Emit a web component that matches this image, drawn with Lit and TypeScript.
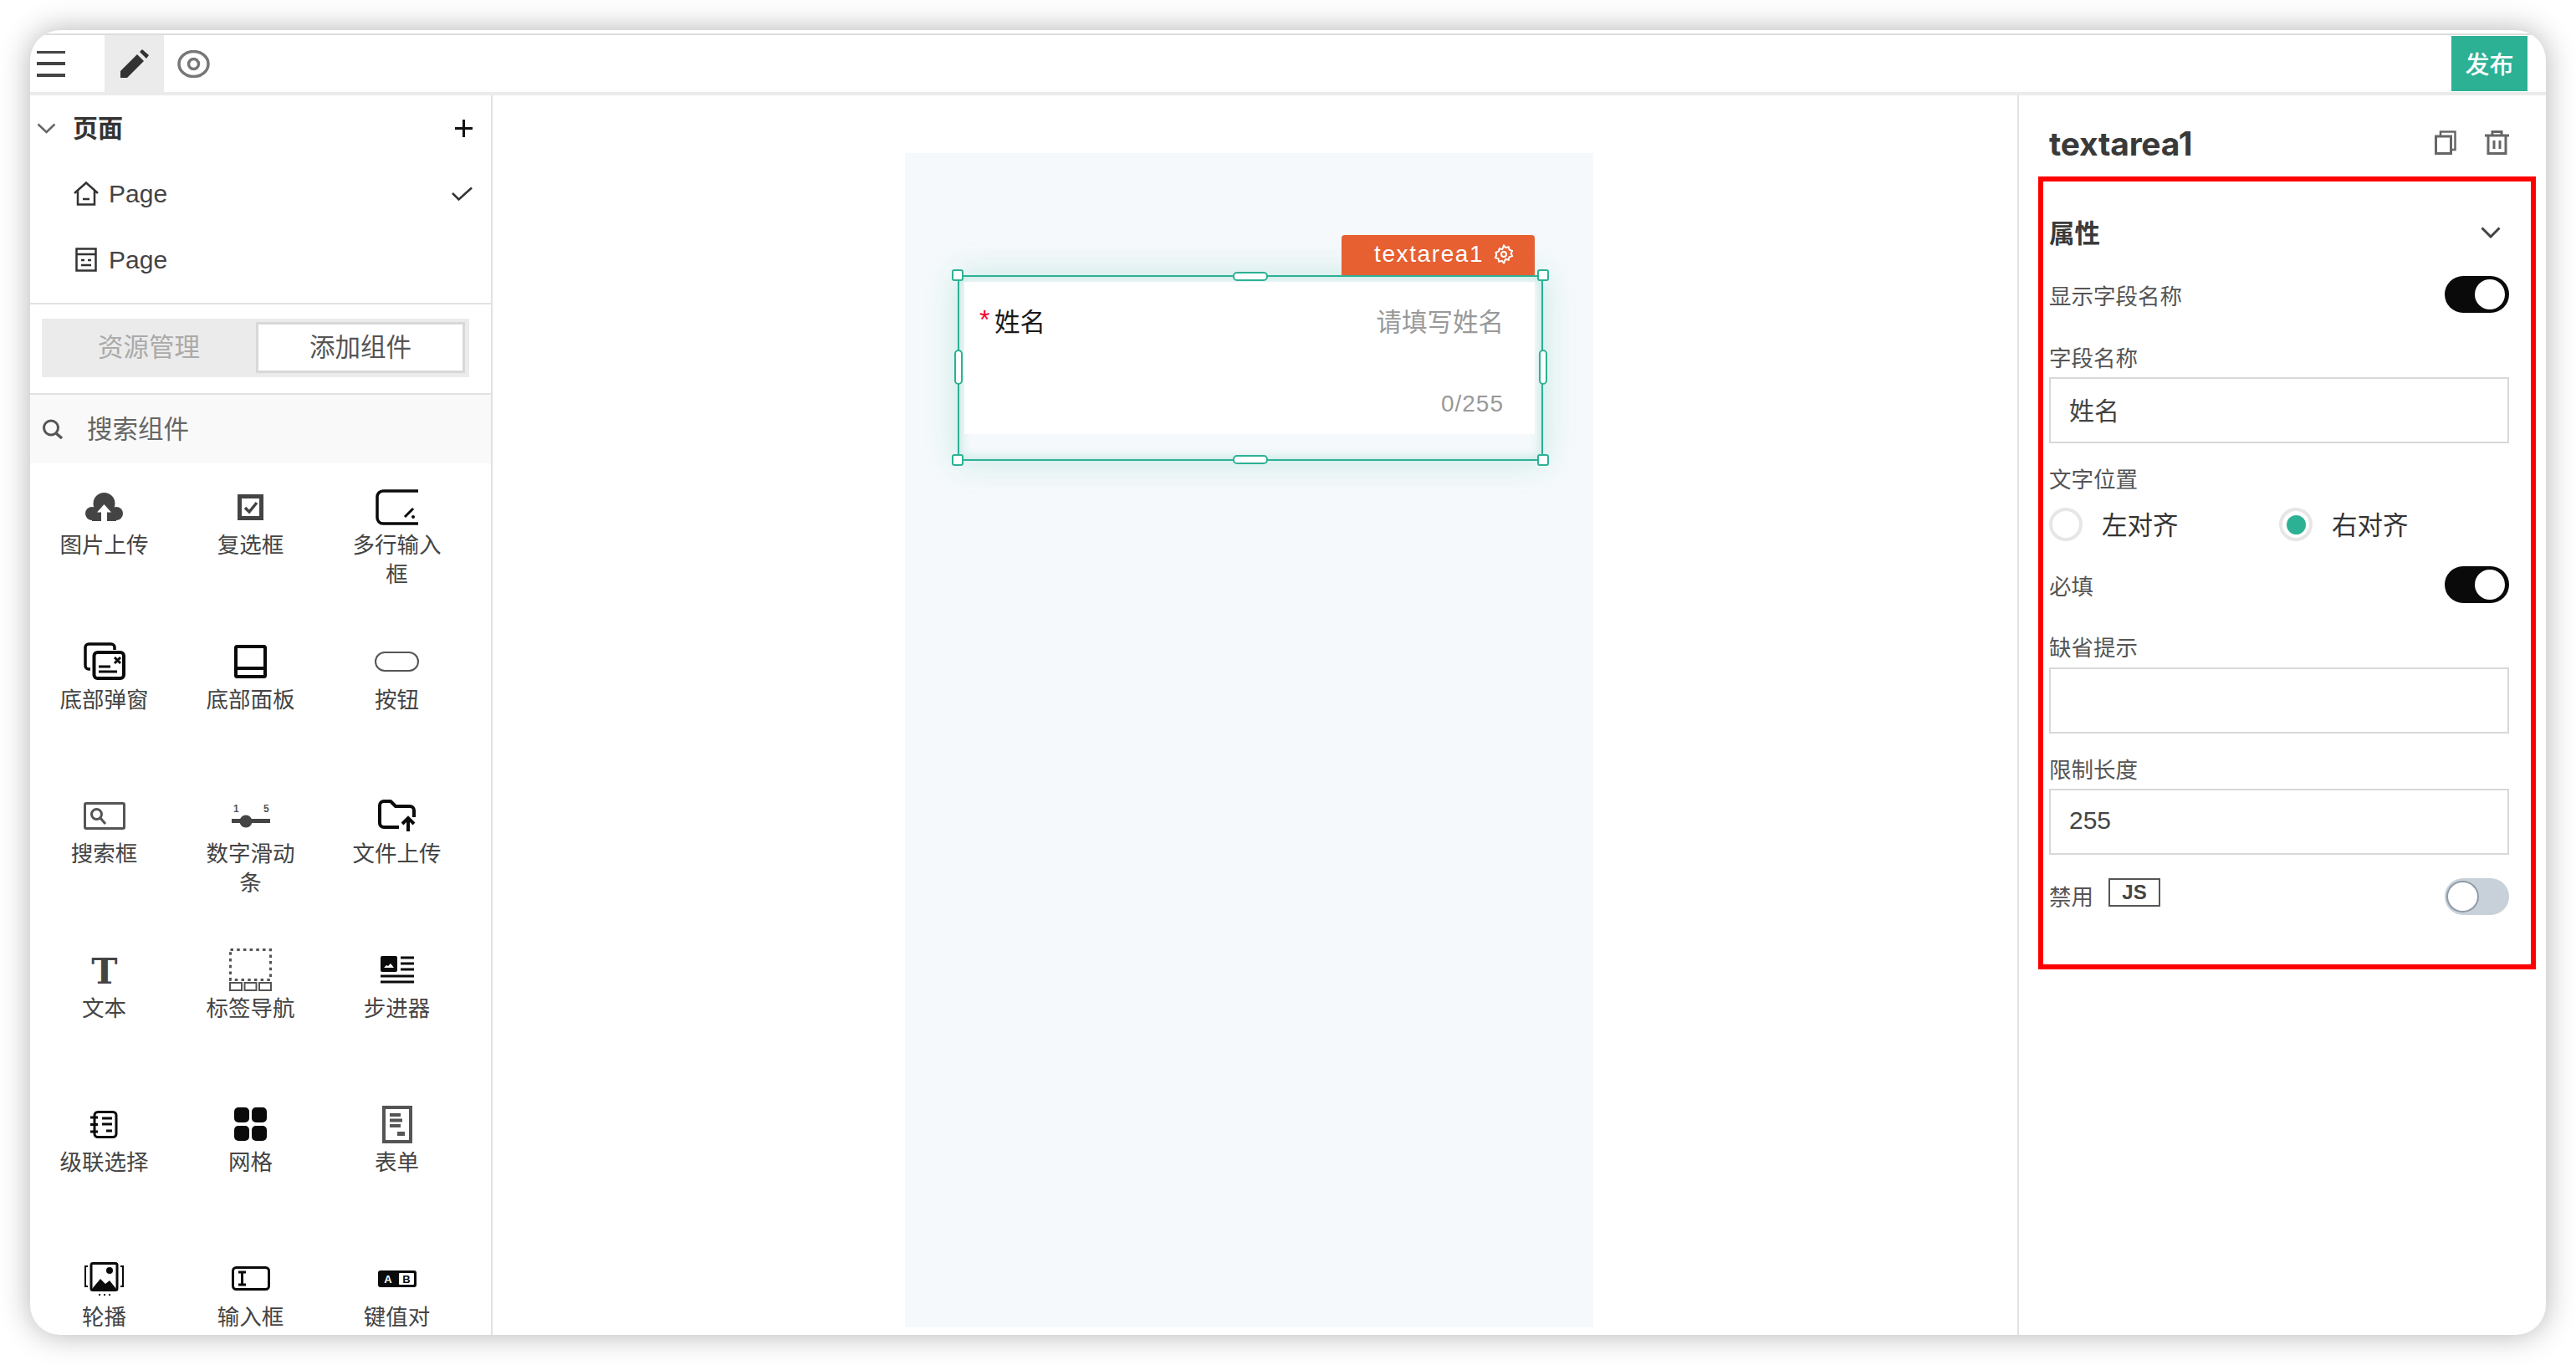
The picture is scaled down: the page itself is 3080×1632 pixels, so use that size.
import { LitElement, html, css, svg } from "lit";
import { customElement } from "lit/decorators.js";

const D = "#444";
const K = "#0a0a0a";

interface Item { label: string; w: number; h: number; art: unknown }

const items: Item[] = [
  { label: "图片上传", w: 45, h: 34, art: svg`
    <circle cx="22.5" cy="13" r="13" fill="${D}"/><circle cx="8" cy="25" r="8" fill="${D}"/><circle cx="37" cy="25" r="8" fill="${D}"/>
    <rect x="8" y="20" width="29" height="14" fill="${D}"/>
    <path d="M22.5 14 31 23.5H26V34H19V23.5H14Z" fill="#fff"/>` },
  { label: "复选框", w: 31, h: 31, art: svg`
    <rect x="2.5" y="2.5" width="26" height="26" fill="none" stroke="${D}" stroke-width="5"/>
    <path d="M9 16l5 5 9-11" fill="none" stroke="${D}" stroke-width="3.5"/>` },
  { label: "多行输入框", w: 51, h: 43, art: svg`
    <path d="M51 2H9a7 7 0 0 0-7 7v25a7 7 0 0 0 7 7h42" fill="none" stroke="${K}" stroke-width="3.5"/>
    <path d="M35 33l10-10" fill="none" stroke="${K}" stroke-width="3"/><circle cx="45" cy="33" r="2" fill="${K}"/>` },
  { label: "底部弹窗", w: 50, h: 45, art: svg`
    <path d="M8 32H6a4 4 0 0 1-4-4V6a4 4 0 0 1 4-4h27a4 4 0 0 1 4 4v3" fill="none" stroke="${K}" stroke-width="3.5"/>
    <rect x="12.5" y="12" width="35.5" height="31" rx="4" fill="none" stroke="${K}" stroke-width="4"/>
    <path d="M18 29h14M18 35h22" stroke="${K}" stroke-width="3"/><path d="M37 18l7 7M44 18l-7 7" stroke="${K}" stroke-width="3"/>` },
  { label: "底部面板", w: 39, h: 40, art: svg`
    <rect x="2" y="2" width="35" height="36" rx="1.5" fill="none" stroke="${K}" stroke-width="4"/>
    <path d="M2 28h35" stroke="${K}" stroke-width="4"/>` },
  { label: "按钮", w: 53, h: 24, art: svg`<rect x="1" y="1" width="51" height="22" rx="11" fill="none" stroke="#555" stroke-width="2"/>` },
  { label: "搜索框", w: 50, h: 33, art: svg`
    <rect x="1.5" y="1.5" width="47" height="30" rx="1.5" fill="none" stroke="#555" stroke-width="3"/>
    <circle cx="15.5" cy="14.5" r="6" fill="none" stroke="#555" stroke-width="3"/><path d="M20 19l6 7" stroke="#555" stroke-width="3"/>` },
  { label: "数字滑动条", w: 46, h: 30, art: svg`
    <text x="2" y="11" class="tiny">1</text><text x="38" y="11" class="tiny">5</text>
    <rect x="0" y="19" width="46" height="5" fill="${D}"/><circle cx="17" cy="22" r="7.5" fill="${D}"/>` },
  { label: "文件上传", w: 45, h: 38, art: svg`
    <path d="M25 33H7a5 5 0 0 1-5-5V7a5 5 0 0 1 5-5h8l6 6h17a5 5 0 0 1 5 5v8" fill="none" stroke="${K}" stroke-width="4" stroke-linejoin="round"/>
    <path d="M36 38V22M29 29l7-7 7 7" fill="none" stroke="${K}" stroke-width="4"/>` },
  { label: "文本", w: 44, h: 52, art: svg`<text x="22" y="42" text-anchor="middle" class="tee">T</text>` },
  { label: "标签导航", w: 51, h: 51, art: svg`
    <rect x="1.5" y="1.5" width="48" height="36" fill="none" stroke="#555" stroke-width="3" stroke-dasharray="3.5 4.2"/>
    <rect x="1" y="41" width="14" height="9" fill="none" stroke="#555" stroke-width="2"/><rect x="18.5" y="41" width="14" height="9" fill="none" stroke="#555" stroke-width="2"/><rect x="36" y="41" width="14" height="9" fill="none" stroke="#555" stroke-width="2"/>` },
  { label: "步进器", w: 40, h: 33, art: svg`
    <rect x="0" y="0" width="20" height="19" rx="2" fill="${K}"/><path d="M4 14l3-3 2 1 3-3 4 5Z" fill="#fff"/>
    <path d="M24 2h16M24 9h16M24 16h16M0 24h40M0 31h40" stroke="${K}" stroke-width="3"/>` },
  { label: "级联选择", w: 33, h: 33, art: svg`
    <rect x="5" y="1.5" width="26" height="30" rx="4" fill="none" stroke="${K}" stroke-width="3"/>
    <path d="M0 8h9M0 16.5h9M0 25h9" stroke="${K}" stroke-width="3"/><path d="M14 9h12M14 16h12M19 24h7" stroke="${K}" stroke-width="3"/>` },
  { label: "网格", w: 39, h: 40, art: svg`
    <rect x="0" y="0" width="18" height="18" rx="5" fill="${K}"/><rect x="21" y="0" width="18" height="18" rx="5" fill="${K}"/>
    <rect x="0" y="22" width="18" height="18" rx="5" fill="${K}"/><rect x="21" y="22" width="18" height="18" rx="5" fill="${K}"/>` },
  { label: "表单", w: 36, h: 45, art: svg`
    <rect x="2" y="2" width="32" height="41" fill="none" stroke="#555" stroke-width="4"/>
    <path d="M9 11h13M9 17.500h15M9 24h13" stroke="#555" stroke-width="4"/><rect x="18" y="31" width="9" height="5" fill="#555"/>` },
  { label: "轮播", w: 47, h: 40, art: svg`
    <rect x="8" y="1.500" width="31" height="32" rx="2" fill="none" stroke="${K}" stroke-width="3"/>
    <path d="M9 32l10-12 6 6 5-4 8 10Z" fill="${K}"/><circle cx="30" cy="10" r="4" fill="${K}"/>
    <path d="M4 5H1v24h3M43 5h3v24h-3" fill="none" stroke="${K}" stroke-width="2"/><path d="M17 39h2M23 39h2M29 39h2" stroke="${K}" stroke-width="2"/>` },
  { label: "输入框", w: 46, h: 29, art: svg`
    <rect x="1.500" y="1.500" width="43" height="26" rx="4" fill="none" stroke="${K}" stroke-width="3"/>
    <path d="M8 7h9M8 22h9M12.500 7v15" stroke="${K}" stroke-width="3"/>` },
  { label: "键值对", w: 46, h: 20, art: svg`
    <rect x="0" y="0" width="46" height="20" rx="3" fill="${K}"/><rect x="25" y="3" width="18" height="14" rx="1" fill="#fff"/>
    <text x="12" y="15" text-anchor="middle" class="ab ab-a">A</text><text x="34" y="15" text-anchor="middle" class="ab">B</text>` },
];

const chevron = (w: number, h: number, c: string, sw: number) => html`
  <svg width="${w}" height="${h}" viewBox="0 0 ${w} ${h}"><path d="M1.500 1.500 ${w / 2} ${h - 2} ${w - 1.5} 1.500" fill="none" stroke="${c}" stroke-width="${sw}"/></svg>`;

@customElement("app-root")
export class AppRoot extends LitElement {
  static styles = css`
    :host { display: block; width: 3080px; height: 1632px; padding: 36px; box-sizing: border-box; background: #fff;
      font-family: "Liberation Sans", "Noto Sans CJK SC", sans-serif; color: #444; }
    * { box-sizing: border-box; }
    .window { height: 1560px; width: 3008px; background: #fff; border-radius: 36px; overflow: hidden; display: flex; flex-direction: column;
      box-shadow: 0 0 36px rgba(0,0,0,.3); padding-top: 4px; position: relative; }
    .toolbar { height: 74px; flex: none; border-top: 2px solid #ddd; border-bottom: 4px solid #ebebeb; display: flex; align-items: center; padding-left: 8px; }
    .burger { width: 34px; height: 31px; display: flex; flex-direction: column; justify-content: space-between; }
    .burger i { display: block; height: 3.5px; background: #444; }
    .tool-on { margin-left: 47px; width: 71px; height: 68px; background: #ebebeb; display: flex; align-items: center; justify-content: center; }
    .eye { margin-left: 16px; display: block; }
    .publish { margin-left: auto; margin-right: 22px; width: 91px; height: 66px; background: #2cb195; color: #fff; font-size: 29px; font-weight: 500; display: flex; align-items: center; justify-content: center; padding-bottom: 2px; }
    .main { flex: 1; min-height: 0; display: flex; }

    .side { width: 553px; flex: none; border-right: 2px solid #e2e2e2; display: flex; flex-direction: column; overflow: hidden; }
    .pages { height: 250px; flex: none; border-bottom: 2px solid #e2e2e2; }
    .pg-head { height: 78px; display: flex; align-items: center; padding: 0 22px 0 8px; font-size: 30px; font-weight: 600; color: #333; }
    .pg-head .t { margin: 0 0 5px 20px; flex: 1; }
    .pg-row { height: 79px; display: flex; align-items: center; padding: 0 22px 0 52px; font-size: 30px; }
    .pg-row .t { flex: 1; margin-left: 12px; }
    .pg-row .ic { width: 30px; display: flex; justify-content: center; }
    .tabs-wrap { height: 108px; flex: none; border-bottom: 2px solid #e2e2e2; padding: 17px 0 0 14px; }
    .tabs { width: 511px; height: 70px; background: #ebebeb; padding: 4px 5px 5px 0; display: flex; font-size: 30.500px; color: #aaa; }
    .tab { flex: 1; display: flex; align-items: center; justify-content: center; padding-bottom: 5px; }
    .tab.on { flex: none; width: 250px; background: #fff; border: 3px solid #d8d8d8; color: #555; }
    .search { height: 82px; flex: none; background: #f9f9f9; display: flex; align-items: center; padding-left: 14px; font-size: 30.500px; color: #666; }
    .search span { margin: 0 0 5px 28px; }
    .grid { display: grid; grid-template-columns: repeat(3, 175px); grid-auto-rows: 184.5px; padding: 26px 0 0 1px; }
    .item { display: flex; flex-direction: column; align-items: center; }
    .item .box { height: 52px; flex: none; display: flex; align-items: center; justify-content: center; }
    .item svg { display: block; }
    .item .lab { font-size: 26.500px; line-height: 35px; width: 110px; text-align: center; color: #444; margin-top: 3px; }
    .tiny { font: 700 12px "Liberation Sans", sans-serif; fill: #555; }
    .tee { font: 700 42px "DejaVu Serif", serif; fill: #444; }
    .ab { font: 700 13px "Liberation Sans", sans-serif; fill: #0a0a0a; }
    .ab-a { fill: #fff; }

    .canvas { flex: 1; min-width: 0; padding: 69px 0 9px 493px; }
    .phone { width: 823px; height: 100%; background: #f5f9fb; padding: 146px 0 0 63px; }
    .sel { position: relative; width: 700px; height: 222px; border: 2px solid #2cb195; padding: 6px 8px 0 6px;
      background: #f5f9fb; box-shadow: 0 0 36px rgba(44,177,149,.24), inset 0 0 14px rgba(44,177,149,.32); }
    .card { height: 182px; background: #fff; display: flex; flex-direction: column; justify-content: space-between; padding: 32px 37px 21px 18px; }
    .f-top { display: flex; justify-content: space-between; align-items: center; font-size: 30.500px; line-height: 32px; }
    .name { color: #1a1a1a; display: flex; }
    .star { color: #f5002d; font-size: 32px; line-height: 26px; width: 18px; }
    .ph { color: #999; }
    .count { align-self: flex-end; font-size: 28px; line-height: 30px; color: #999; letter-spacing: 1px; }
    .tag { position: absolute; right: 8px; top: -50px; width: 231px; height: 48px; background: #e66032; border-radius: 4px 4px 0 0; color: #fff;
      font-size: 28px; letter-spacing: 1.600px; display: flex; align-items: center; padding: 0 0 3px 39px; }
    .tag svg { margin-left: 12px; }
    .h { position: absolute; background: #fff; border: 2.500px solid #2cb195; border-radius: 5px; }
    .h.c { width: 14px; height: 14px; border-radius: 3px; }
    .h.tl { left: -9px; top: -9px; } .h.tr { right: -9px; top: -9px; } .h.bl { left: -9px; bottom: -8px; } .h.br { right: -9px; bottom: -8px; }
    .h.hz { width: 42px; height: 11px; left: 327px; }
    .h.hz.t { top: -6px; } .h.hz.b { bottom: -6px; }
    .h.vt { width: 10px; height: 42px; top: 87px; }
    .h.vt.l { left: -6px; } .h.vt.r { right: -7px; }

    .panel { width: 632px; flex: none; border-left: 2px solid #e2e2e2; padding: 0 44px 0 36px; position: relative; font-size: 26.500px; color: #555; }
    .title { height: 114px; display: flex; align-items: center; }
    .title .name2 { flex: 1; font: 700 39px Inter, sans-serif; color: #3a3a3a; letter-spacing: -.2px; }
    .title svg + svg { margin-left: 34px; }
    .title .ops { display: flex; align-items: center; margin-top: -2px; }
    .sec { height: 100px; display: flex; align-items: center; justify-content: space-between; font-size: 30.500px; font-weight: 600; color: #3a3a3a; padding: 0 10px 0 0; }
    .sec span { margin-bottom: 3px; }
    .row { height: 48px; display: flex; align-items: center; justify-content: space-between; }
    .lbl { height: 36px; line-height: 36px; }
    .input { height: 79px; border: 2px solid #d8d8d8; padding: 0 0 4px 22px; display: flex; align-items: center; font-size: 30px; color: #444; }
    .m4 { margin-top: 4px; } .m5 { margin-top: 5px; } .m26 { margin-top: 26px; } .m28 { margin-top: 28px; } .m34 { margin-top: 34px; } .m35 { margin-top: 35px; }
    .sw { width: 77px; height: 44px; border-radius: 22px; background: #0a0a0a; display: flex; justify-content: flex-end; align-items: center; padding-right: 5px; }
    .sw i { display: block; width: 36px; height: 36px; border-radius: 50%; background: #fff; }
    .sw.off { background: #c8d1d9; justify-content: flex-start; padding: 0 0 0 2px; }
    .sw.off i { width: 39px; height: 38px; border: 2px solid #8f9ba6; }
    .radios { display: flex; margin-top: 15px; height: 40px; font-size: 30.500px; color: #333; }
    .radio { width: 275px; display: flex; align-items: center; padding-bottom: 3px; }
    .dot { width: 40px; height: 40px; border-radius: 50%; border: 4px solid #e6e6e6; display: flex; align-items: center; justify-content: center; margin: 3px 23px 0 0; }
    .dot i { display: block; width: 23px; height: 23px; border-radius: 50%; background: #2cb195; }
    .js-l { display: flex; align-items: flex-start; height: 100%; }
    .js-l .tx { margin-top: 7px; line-height: 36px; }
    .js { margin: 2px 0 0 18px; width: 62px; height: 34px; border: 2px solid #555; font-size: 24px; font-weight: 700; color: #444; display: flex; align-items: center; justify-content: center; }
    .redbox { position: absolute; left: 23px; top: 97px; width: 595px; height: 948px; border: 6px solid #f00; pointer-events: none; }
  `;

  render() {
    return html`
      <div class="window">
        <div class="toolbar">
          <div class="burger"><i></i><i></i><i></i></div>
          <div class="tool-on">
            <svg width="34" height="34" viewBox="0 0 34 34"><path d="M0 34V26L20 6 28 14 8 34ZM23 3l3-3 8 7-3 4Z" fill="#333"/></svg>
          </div>
          <svg class="eye" width="39" height="33" viewBox="0 0 39 33"><ellipse cx="19.500" cy="16.500" rx="17.500" ry="15" fill="none" stroke="#777" stroke-width="3.500"/><circle cx="19.500" cy="16.500" r="6" fill="none" stroke="#777" stroke-width="3.500"/></svg>
          <div class="publish">发布</div>
        </div>
        <div class="main">
          <aside class="side">
            <div class="pages">
              <div class="pg-head">
                ${chevron(23, 13, "#666", 2.5)}
                <span class="t">页面</span>
                <svg width="21" height="21" viewBox="0 0 21 21"><path d="M0 10.500h21M10.500 0v21" stroke="#111" stroke-width="3"/></svg>
              </div>
              <div class="pg-row">
                <span class="ic"><svg width="30" height="29" viewBox="0 0 30 29"><path d="M1 14 15 1.500 29 14M5 11v16.500h20V11M11 21h8" fill="none" stroke="#333" stroke-width="2.500"/></svg></span>
                <span class="t">Page</span>
                <svg width="25" height="17" viewBox="0 0 25 17"><path d="M1 8l7.500 7.500L24 1.500" fill="none" stroke="#333" stroke-width="2.500"/></svg>
              </div>
              <div class="pg-row">
                <span class="ic"><svg width="26" height="29" viewBox="0 0 26 29"><rect x="1.500" y="1.500" width="23" height="26" fill="none" stroke="#333" stroke-width="2.500"/><path d="M1.500 8h23M7 15h4M15 15h4M7 21h12" stroke="#333" stroke-width="2.500"/></svg></span>
                <span class="t">Page</span>
              </div>
            </div>
            <div class="tabs-wrap">
              <div class="tabs"><div class="tab">资源管理</div><div class="tab on">添加组件</div></div>
            </div>
            <div class="search">
              <svg width="26" height="24" viewBox="0 0 26 24"><circle cx="11" cy="10.500" r="8.500" fill="none" stroke="#555" stroke-width="3"/><path d="M17 17l7 6" stroke="#555" stroke-width="3.500"/></svg>
              <span>搜索组件</span>
            </div>
            <div class="grid">
              ${items.map(i => html`
                <div class="item">
                  <div class="box"><svg width="${i.w}" height="${i.h}" viewBox="0 0 ${i.w} ${i.h}">${i.art}</svg></div>
                  <div class="lab">${i.label}</div>
                </div>`)}
            </div>
          </aside>
          <section class="canvas">
            <div class="phone">
              <div class="sel">
                <div class="card">
                  <div class="f-top">
                    <span class="name"><span class="star">*</span>姓名</span>
                    <span class="ph">请填写姓名</span>
                  </div>
                  <div class="count">0/255</div>
                </div>
                <div class="tag">textarea1
                  <svg width="24" height="24" viewBox="0 0 24 24"><path d="M12 1.500l2.200 2.600 3.500-.9.900 3.400 3.400 1.200-1.300 3.200 1.300 3.100-3.400 1.200-.9 3.400-3.500-.9L12 22.500l-2.200-2.700-3.500.9-.9-3.400-3.400-1.200 1.300-3.100L2.500 9.800l3.400-1.200.9-3.400 3.500.9Z" fill="none" stroke="#fff" stroke-width="2"/><circle cx="12" cy="12" r="3" fill="none" stroke="#fff" stroke-width="2"/></svg>
                </div>
                <i class="h c tl"></i><i class="h c tr"></i><i class="h c bl"></i><i class="h c br"></i>
                <i class="h hz t"></i><i class="h hz b"></i><i class="h vt l"></i><i class="h vt r"></i>
              </div>
            </div>
          </section>
          <aside class="panel">
            <div class="title">
              <span class="name2">textarea1</span>
              <span class="ops">
                <svg width="26" height="29" viewBox="0 0 26 29"><rect x="1.500" y="7" width="18" height="20.500" fill="none" stroke="#666" stroke-width="3"/><path d="M7 6V1.500h17.500V23H20" fill="none" stroke="#666" stroke-width="2.500"/></svg>
                <svg width="29" height="29" viewBox="0 0 29 29"><path d="M0 6h29M9 6V1.500h11V6M4 6v21.500h21V6M11 12v10M18 12v10" fill="none" stroke="#666" stroke-width="3"/></svg>
              </span>
            </div>
            <div class="sec"><span>属性</span>${chevron(24, 14, "#444", 3)}</div>
            <div class="row"><span>显示字段名称</span><span class="sw"><i></i></span></div>
            <div class="lbl m35">字段名称</div>
            <div class="input m4">姓名</div>
            <div class="lbl m26">文字位置</div>
            <div class="radios">
              <div class="radio"><span class="dot"></span>左对齐</div>
              <div class="radio"><span class="dot"><i></i></span>右对齐</div>
            </div>
            <div class="row m28"><span>必填</span><span class="sw"><i></i></span></div>
            <div class="lbl m34">缺省提示</div>
            <div class="input m5"></div>
            <div class="lbl m26">限制长度</div>
            <div class="input m4">255</div>
            <div class="row m26">
              <span class="js-l"><span class="tx">禁用</span><span class="js">JS</span></span>
              <span class="sw off"><i></i></span>
            </div>
            <div class="redbox"></div>
          </aside>
        </div>
      </div>
    `;
  }
}
